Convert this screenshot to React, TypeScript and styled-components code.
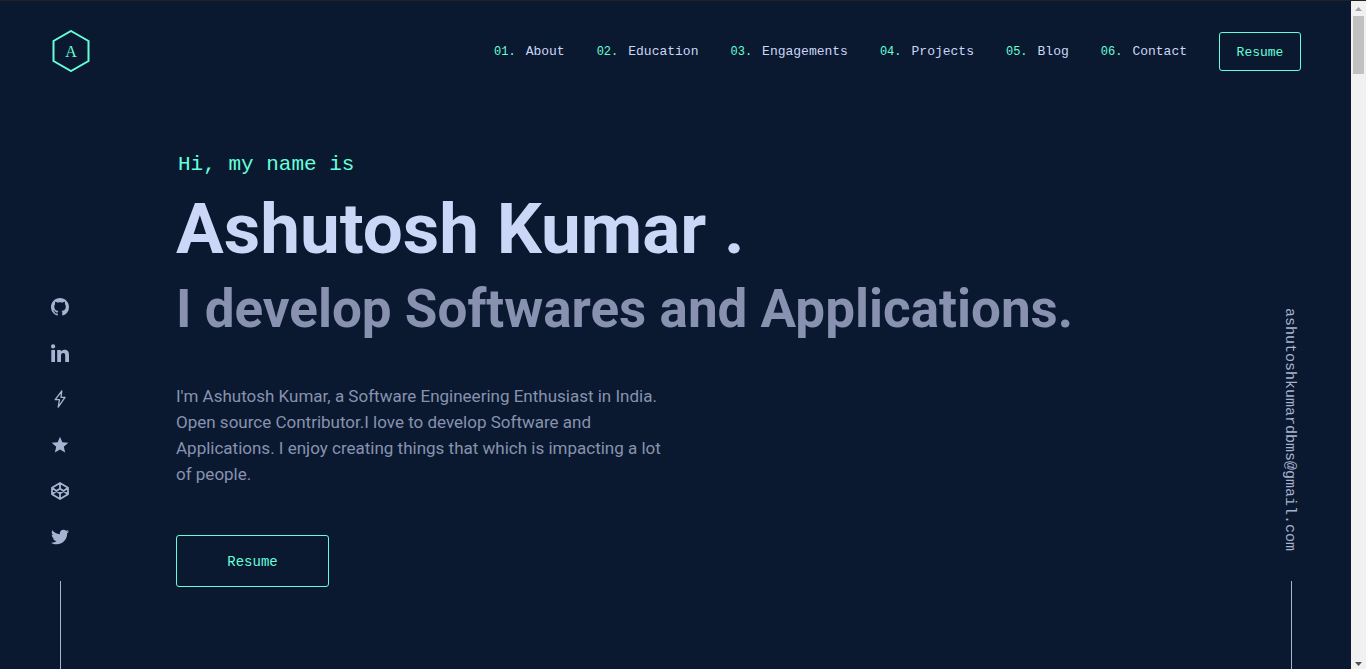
import React from "react";
import styled, { createGlobalStyle } from "styled-components";
import { FaTwitter } from "react-icons/fa";
import { MdStar } from "react-icons/md";

const colors = {
  navy: "#0a192f",
  green: "#64ffda",
  slate: "#8892b0",
  lightSlate: "#a8b2d1",
  lightestSlate: "#ccd6f6",
};

const mono = `"Liberation Mono", monospace`;
const sans = `Roboto, "Liberation Sans", sans-serif`;

const GlobalStyle = createGlobalStyle`
  *, *::before, *::after { box-sizing: border-box; }
  body {
    margin: 0;
    background: ${colors.navy};
    color: ${colors.slate};
    font-family: ${sans};
  }
  h1, h2, p, ul, ol { margin: 0; padding: 0; }
  ul, ol { list-style: none; }
  a { color: inherit; text-decoration: none; }
`;

const Frame = styled.div`
  display: flex;
  height: 100vh;
  border-top: 1px solid #222222;
`;

const Page = styled.div`
  flex: 1;
  min-width: 0;
  display: flex;
  flex-direction: column;
  padding: 0 40px;
`;

const Header = styled.header`
  flex: none;
  display: flex;
  align-items: center;
  justify-content: space-between;
  height: 100px;
  padding: 0 10px;
`;

const Logo = styled.a`
  display: block;
  width: 42px;
  height: 42px;
  color: ${colors.green};

  svg { display: block; }
  text { font-family: "Liberation Serif", serif; font-size: 16px; }
`;

const Nav = styled.nav`
  display: flex;
  align-items: center;
  gap: 32px;
  font-family: ${mono};
  font-size: 13px;
`;

const NavList = styled.ol`
  display: flex;
  gap: 32px;
`;

const NavLink = styled.a`
  display: flex;
  align-items: baseline;
  gap: 10px;
  color: ${colors.lightestSlate};
`;

const NavNumber = styled.span`
  color: ${colors.green};
  font-size: 12px;
`;

const OutlineButton = styled.button<{ $large?: boolean }>`
  width: ${(p) => (p.$large ? 153 : 82)}px;
  height: ${(p) => (p.$large ? 52 : 39)}px;
  padding: 2px 0 0;
  border: 1px solid ${colors.green};
  border-radius: 3px;
  background: transparent;
  color: ${colors.green};
  font-family: ${mono};
  font-size: ${(p) => (p.$large ? 14 : 13)}px;
  cursor: pointer;
`;

const Body = styled.div`
  flex: 1;
  min-height: 0;
  display: grid;
  grid-template-columns: 40px 1fr 40px;
`;

const Rail = styled.aside`
  display: flex;
  flex-direction: column;
  align-items: center;
  justify-content: flex-end;
  color: ${colors.lightSlate};

  &::after {
    content: "";
    width: 1px;
    height: 88px;
    background: ${colors.lightSlate};
  }
`;

const SocialList = styled.ul`
  display: flex;
  flex-direction: column;
  gap: 26px;
  margin-bottom: 34px;
`;

const SocialLink = styled.a`
  display: flex;
  align-items: center;
  justify-content: center;
  width: 20px;
  height: 20px;
`;

const Email = styled.a`
  margin: 0 4px 30px 0;
  writing-mode: vertical-rl;
  font-family: ${mono};
  font-size: 15px;
  line-height: 20px;
`;

const Hero = styled.main`
  padding: 50px 96px 0;
`;

const Greeting = styled.p`
  padding-left: 2px;
  color: ${colors.green};
  font-family: ${mono};
  font-size: 21px;
  line-height: 28px;
`;

const Name = styled.h1`
  margin-top: 10px;
  color: ${colors.lightestSlate};
  font-size: 71px;
  font-weight: 700;
  line-height: 80px;
`;

const Tagline = styled.h2`
  font-size: 53px;
  font-weight: 700;
  line-height: 80px;
  white-space: nowrap;
`;

const Intro = styled.p`
  max-width: 500px;
  margin: 34px 0 48px;
  font-size: 17px;
  line-height: 26px;
`;

const Scrollbar = styled.div`
  flex: none;
  display: flex;
  flex-direction: column;
  align-items: center;
  width: 15px;
  padding: 6px 0 3px;
  background: #f1f1f1;

  svg { display: block; }
`;

const Thumb = styled.div`
  width: 11px;
  height: 58px;
  margin: 5px 0 auto;
  background: #c1c1c1;
`;

const GitHubIcon = () => (
  <svg width="18" height="18" viewBox="0 0 16 16" fill="currentColor">
    <path
      fillRule="evenodd"
      d="M8 0C3.58 0 0 3.58 0 8c0 3.54 2.29 6.53 5.47 7.59.4.07.55-.17.55-.38 0-.19-.01-.82-.01-1.49-2.01.37-2.53-.49-2.69-.94-.09-.23-.48-.94-.82-1.13-.28-.15-.68-.52-.01-.53.63-.01 1.08.58 1.23.82.72 1.21 1.87.87 2.33.66.07-.52.28-.87.51-1.07-1.78-.2-3.64-.89-3.64-3.95 0-.87.31-1.59.82-2.15-.08-.2-.36-1.02.08-2.12 0 0 .67-.21 2.2.82.64-.18 1.32-.27 2-.27s1.36.09 2 .27c1.53-1.04 2.2-.82 2.2-.82.44 1.1.16 1.92.08 2.12.51.56.82 1.27.82 2.15 0 3.07-1.87 3.75-3.65 3.95.29.25.54.73.54 1.48 0 1.07-.01 1.93-.01 2.2 0 .21.15.46.55.38A8.01 8.01 0 0 0 16 8c0-4.42-3.58-8-8-8z"
    />
  </svg>
);

const LinkedInIcon = () => (
  <svg width="18" height="18" viewBox="0 0 18 18" fill="currentColor">
    <circle cx="2.1" cy="2.4" r="2.1" />
    <path d="M.3 6H4v12H.3zM6.2 6h3.6v1.7c.6-1 1.8-2 3.6-2 3.8 0 4.6 2.4 4.6 5.6V18h-3.8v-5.9c0-1.4 0-3.2-2-3.2s-2.2 1.5-2.2 3.1v6H6.2z" />
  </svg>
);

const BoltIcon = () => (
  <svg width="18" height="18" viewBox="0 0 18 18" fill="none" stroke="currentColor" strokeWidth="1.3" strokeLinejoin="round">
    <path d="M10.8 1 4.2 9.7h4.3L7.2 17.2 14 7.3h-4z" />
  </svg>
);

const CodePenIcon = () => (
  <svg width="20" height="20" viewBox="0 0 20 20" fill="none" stroke="currentColor" strokeWidth="1.8" strokeLinejoin="round">
    <path d="M10 1.9 18 6.8v6.4l-8 4.9-8-4.9V6.8zM10 1.9v5.6M10 12.5v5.6M2 6.8l8 5.7 8-5.7M2 13.2l8-5.7 8 5.7" />
  </svg>
);

const navItems = ["About", "Education", "Engagements", "Projects", "Blog", "Contact"];

const socials = [
  { label: "GitHub", icon: <GitHubIcon /> },
  { label: "LinkedIn", icon: <LinkedInIcon /> },
  { label: "Coding profile", icon: <BoltIcon /> },
  { label: "Ratings", icon: <MdStar size={20} /> },
  { label: "CodePen", icon: <CodePenIcon /> },
  { label: "Twitter", icon: <FaTwitter size={18} /> },
];

export default function App() {
  return (
    <>
      <GlobalStyle />
      <Frame>
        <Page>
          <Header>
            <Logo href="#" aria-label="Home">
              <svg width="42" height="42" viewBox="0 0 42 42">
                <path d="M21 1 L38.5 11 V31 L21 41 L3.5 31 V11 Z" fill="none" stroke="currentColor" strokeWidth="2" />
                <text x="21" y="27" textAnchor="middle" fill="currentColor">A</text>
              </svg>
            </Logo>
            <Nav>
              <NavList>
                {navItems.map((item, i) => (
                  <li key={item}>
                    <NavLink href={`#${item.toLowerCase()}`}>
                      <NavNumber>{`0${i + 1}.`}</NavNumber>
                      {item}
                    </NavLink>
                  </li>
                ))}
              </NavList>
              <OutlineButton type="button">Resume</OutlineButton>
            </Nav>
          </Header>
          <Body>
            <Rail>
              <SocialList>
                {socials.map((s) => (
                  <li key={s.label}>
                    <SocialLink href="#" aria-label={s.label}>{s.icon}</SocialLink>
                  </li>
                ))}
              </SocialList>
            </Rail>
            <Hero>
              <Greeting>Hi, my name is</Greeting>
              <Name>Ashutosh Kumar .</Name>
              <Tagline>I develop Softwares and Applications.</Tagline>
              <Intro>
                I'm Ashutosh Kumar, a Software Engineering Enthusiast in India. Open source
                Contributor.I love to develop Software and Applications. I enjoy creating things
                that which is impacting a lot of people.
              </Intro>
              <OutlineButton type="button" $large>Resume</OutlineButton>
            </Hero>
            <Rail>
              <Email href="mailto:ashutoshkumardbms@gmail.com">ashutoshkumardbms@gmail.com</Email>
            </Rail>
          </Body>
        </Page>
        <Scrollbar aria-hidden="true">
          <svg width="7" height="4" viewBox="0 0 7 4"><path d="M3.5 0 L7 4 H0 Z" fill="#a3a3a3" /></svg>
          <Thumb />
          <svg width="7" height="4" viewBox="0 0 7 4"><path d="M0 0 H7 L3.5 4 Z" fill="#505050" /></svg>
        </Scrollbar>
      </Frame>
    </>
  );
}
